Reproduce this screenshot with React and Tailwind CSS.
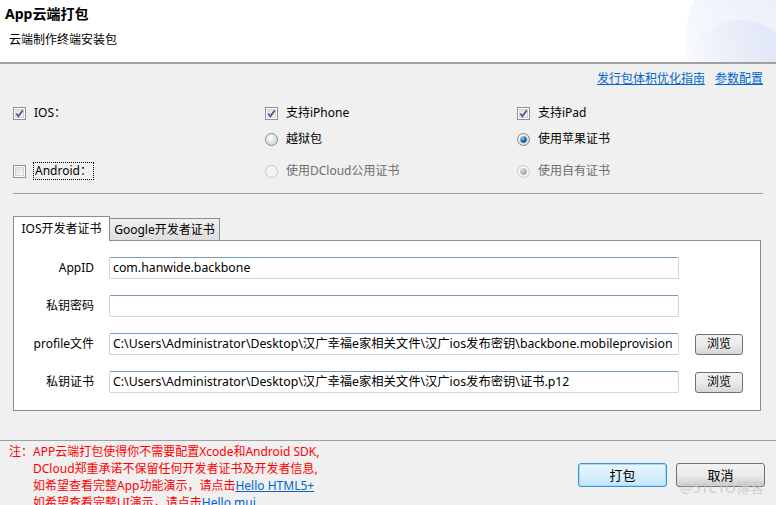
import React from "react";

const font = "font-['Noto_Sans','Noto_Sans_CJK_SC',sans-serif]";

function CheckBox({ checked }) {
  return (
    <svg width="13" height="13" viewBox="0 0 13 13" className="shrink-0">
      <defs>
        <linearGradient id="cbg" x1="0" y1="0" x2="1" y2="1">
          <stop offset="0" stopColor="#dcdcdc" />
          <stop offset="1" stopColor="#fbfbfb" />
        </linearGradient>
      </defs>
      <rect x="0.5" y="0.5" width="12" height="12" fill="#fff" stroke="#8e8f8f" />
      <rect x="2.5" y="2.5" width="8" height="8" fill="url(#cbg)" stroke="#d4d4d4" />
      {checked && (
        <path d="M3.3 6.6 L5.4 9.2 L9.8 3.4" fill="none" stroke="#4a5f97" strokeWidth="1.8" />
      )}
    </svg>
  );
}

function Radio({ checked, disabled }) {
  return (
    <svg width="13" height="13" viewBox="0 0 13 13" className="shrink-0">
      <defs>
        <radialGradient id="rg" cx="0.4" cy="0.35" r="0.7">
          <stop offset="0" stopColor="#ffffff" />
          <stop offset="1" stopColor="#d0d0d0" />
        </radialGradient>
        <radialGradient id="rb" cx="0.35" cy="0.3" r="0.7">
          <stop offset="0" stopColor="#8fd0f5" />
          <stop offset="0.6" stopColor="#1c78b6" />
          <stop offset="1" stopColor="#0d3f6b" />
        </radialGradient>
        <radialGradient id="rd" cx="0.35" cy="0.3" r="0.7">
          <stop offset="0" stopColor="#e0e0e0" />
          <stop offset="1" stopColor="#9b9b9b" />
        </radialGradient>
      </defs>
      <circle cx="6.5" cy="6.5" r="6" fill={disabled ? "#f4f4f4" : "url(#rg)"} stroke={disabled ? "#c8c8c8" : "#8e8f8f"} />
      {checked && <circle cx="6.5" cy="6.5" r="3.2" fill={disabled ? "url(#rd)" : "url(#rb)"} />}
    </svg>
  );
}

function Opt({ children, box, disabled, focus }) {
  return (
    <div className="flex items-center h-[20px]">
      {box}
      <span
        className={`ml-[8px] leading-[16px] ${disabled ? "text-[#6d6d6d]" : "text-black"} ${
          focus ? "outline outline-1 outline-dotted outline-black px-[1px]" : ""
        }`}
      >
        {children}
      </span>
    </div>
  );
}

function Field({ label, value, browse }) {
  return (
    <div className="flex items-center h-[22px]">
      <div className="w-[80px] text-right text-black">{label}</div>
      <div className="ml-[15px] w-[570px] h-[22px] bg-white border border-[#c5d9e8] border-t-[#7a9cb8] rounded-[2px] px-[3px] flex items-center overflow-hidden whitespace-nowrap text-black text-[12.3px]">
        {value}
      </div>
      {browse && (
        <button className="ml-[16px] w-[48px] h-[21px] rounded-[3px] border border-[#707070] bg-gradient-to-b from-[#f2f2f2] via-[#ebebeb] to-[#d6d6d6] text-black text-[12px] leading-none">
          浏览
        </button>
      )}
    </div>
  );
}

export default function App() {
  return (
    <div className={`${font} relative w-[776px] h-[505px] overflow-hidden bg-[#f0f0f0] text-[12px] text-black`}>
      {/* header */}
      <div className="relative h-[64px] bg-white border-b-2 border-[#a0a0a0] overflow-hidden">
        <div className="absolute -right-[60px] -top-[40px] w-[150px] h-[160px] rounded-full bg-gradient-to-bl from-[#dfe6f7] via-[#eef2fb] to-white opacity-90" />
        <div className="absolute -right-[20px] top-[20px] w-[110px] h-[110px] rounded-full bg-gradient-to-l from-[#dde4f6] to-transparent" />
        <div className="relative pl-[5px] pt-[4px] text-[14px] font-bold leading-[20px]">App云端打包</div>
        <div className="relative pl-[9px] pt-[8px] leading-[16px]">云端制作终端安装包</div>
      </div>

      <div className="px-[13px]">
        <div className="flex justify-end gap-[10px] pt-[7px] leading-[16px]">
          <a className="text-[#0066cc] underline">发行包体积优化指南</a>
          <a className="text-[#0066cc] underline">参数配置</a>
        </div>

        <div className="grid grid-cols-[252px_252px_1fr] mt-[16px]">
          <Opt box={<CheckBox checked />}>IOS：</Opt>
          <Opt box={<CheckBox checked />}>支持iPhone</Opt>
          <Opt box={<CheckBox checked />}>支持iPad</Opt>
        </div>
        <div className="grid grid-cols-[252px_252px_1fr] mt-[6px]">
          <div />
          <Opt box={<Radio />}>越狱包</Opt>
          <Opt box={<Radio checked />}>使用苹果证书</Opt>
        </div>
        <div className="grid grid-cols-[252px_252px_1fr] mt-[12px]">
          <Opt box={<CheckBox />} focus>Android：</Opt>
          <Opt box={<Radio disabled />} disabled>使用DCloud公用证书</Opt>
          <Opt box={<Radio checked disabled />} disabled>使用自有证书</Opt>
        </div>

        <div className="mt-[12px] h-px bg-[#a0a0a0] w-[750px]" />

        {/* tabs */}
        <div className="mt-[21px] flex items-end h-[25px]">
          <div className="relative z-10 h-[25px] w-[97px] bg-white border border-b-0 border-[#898c95] flex items-center justify-center leading-none -mb-px pb-[1px]">
            IOS开发者证书
          </div>
          <div className="h-[22px] w-[110px] bg-gradient-to-b from-[#f0f0f0] to-[#dedede] border border-l-0 border-b-0 border-[#898c95] flex items-center justify-center leading-none">
            Google开发者证书
          </div>
        </div>
        <div className="w-[748px] h-[171px] bg-white border border-[#898c95] pt-[16px] flex flex-col gap-[16px]">
          <Field label="AppID" value="com.hanwide.backbone" />
          <Field label="私钥密码" value="" />
          <Field
            label="profile文件"
            value="C:\Users\Administrator\Desktop\汉广幸福e家相关文件\汉广ios发布密钥\backbone.mobileprovision"
            browse
          />
          <Field
            label="私钥证书"
            value="C:\Users\Administrator\Desktop\汉广幸福e家相关文件\汉广ios发布密钥\证书.p12"
            browse
          />
        </div>
      </div>

      {/* footer */}
      <div className="mt-[29px] border-t border-[#a0a0a0] flex">
        <div className="pl-[9px] pt-[2px] flex text-[#ff0000] leading-[17px]">
          <span>注：</span>
          <div>
            <div>APP云端打包使得你不需要配置Xcode和Android SDK,</div>
            <div>DCloud郑重承诺不保留任何开发者证书及开发者信息,</div>
            <div>
              如希望查看完整App功能演示，请点击<a className="text-[#0066cc] underline">Hello HTML5+</a>
            </div>
            <div>
              如希望查看完整UI演示，请点击<a className="text-[#0066cc] underline">Hello mui</a>
            </div>
          </div>
        </div>
        <div className="ml-auto mr-[11px] mt-[22px] flex gap-[9px]">
          <button className="w-[89px] h-[24px] rounded-[3px] border border-[#3c8fd0] bg-gradient-to-b from-[#eaf6fd] via-[#d9effc] to-[#bee6fd] shadow-[inset_0_0_0_1px_#a6dcf8] text-[13px] leading-none">
            打包
          </button>
          <button className="w-[89px] h-[24px] rounded-[3px] border border-[#707070] bg-gradient-to-b from-[#f2f2f2] via-[#ebebeb] to-[#cfcfcf] text-[13px] leading-none">
            取消
          </button>
        </div>
      </div>

      <div className="absolute left-[680px] top-[478px] text-[14px] text-[#c8c8c8] opacity-80 leading-[20px]">@51CTO博客</div>
    </div>
  );
}
